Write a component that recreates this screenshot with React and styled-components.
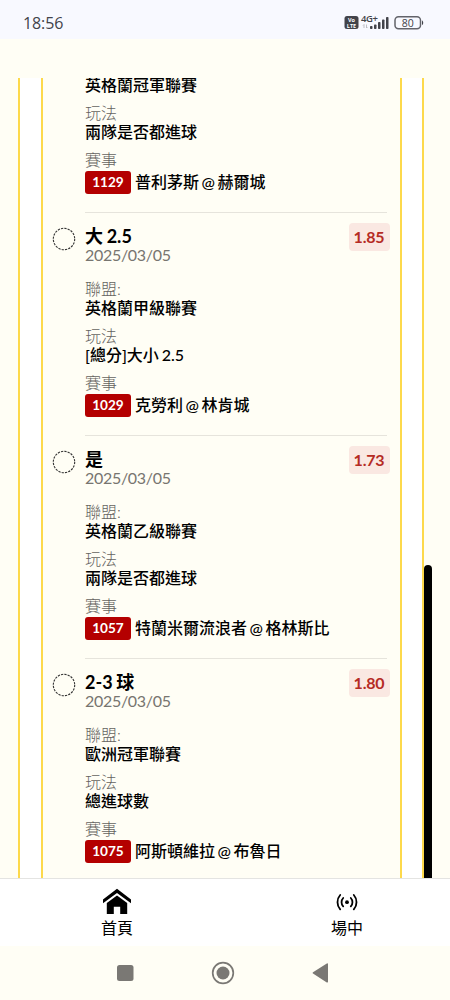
import React from 'react';
import styled, { createGlobalStyle } from 'styled-components';

const GlobalStyle = createGlobalStyle`
    * {
        box-sizing: border-box;
    }
    body {
        margin: 0;
        background: #fffef5;
        font-family: Lato, "Noto Sans CJK TC", sans-serif;
        font-size: 16px;
        color: #000;
    }
`

const Screen = styled.div`
    width: 450px;
    height: 1000px;
    display: flex;
    flex-direction: column;
    overflow: hidden;
    background: #fffef5;
`

const StatusBar = styled.header`
    height: 39px;
    flex: none;
    display: flex;
    justify-content: space-between;
    align-items: center;
    padding: 6px 26px 0 23px;
    background: #f8f9ff;
`

const Clock = styled.span`
    font-family: "Open Sans", sans-serif;
    font-size: 16px;
    line-height: 20px;
    letter-spacing: -0.1px;
    font-weight: 500;
    color: #42434a;
`

const StatusIcons = styled.svg`
    width: 80px;
    height: 24px;
    font-family: "Open Sans", sans-serif;
    font-weight: 700;
    fill: #42434a;
`

const Scroller = styled.main`
    position: relative;
    height: 800px;
    margin-top: 39px;
    flex: none;
    padding: 0 26px 0 18px;
    overflow: hidden;
`

const Frame = styled.div`
    height: 100%;
    padding: 0 20.5px 0 21px;
    background: #fff;
    border: solid #fdd94b;
    border-width: 0 2px;
`

const Slip = styled.div`
    display: flow-root;
    height: 100%;
    padding: 0 13px 0 10px;
    background: #fffef5;
    border: solid #fdd94b;
    border-width: 0 2px;
`

const ScrollThumb = styled.div`
    position: absolute;
    top: 487px;
    bottom: 0;
    left: 424px;
    width: 8px;
    border-radius: 4px 4px 0 0;
    background: #000;
`

const Bet = styled.article`
    display: grid;
    grid-template-columns: 32px 1fr;
    height: ${props => props.$cut ? '137px' : '223.2px'};
    margin-top: ${props => props.$cut ? '-3px' : '0'};
`

const Check = styled.svg`
    width: 24px;
    height: 24px;
    margin-top: 15px;
    margin-left: -1px;
    fill: none;
    stroke: #333;
`

const Body = styled.div`
    border-top: ${props => props.$cut ? '0' : '1px solid #e6e4dc'};
`

const Head = styled.div`
    display: flex;
    justify-content: space-between;
    align-items: flex-start;
    height: 66px;
    padding-top: 10px;
    margin-right: -3px;
`

const Title = styled.h3`
    margin: 3px 0 0;
    font-size: 18px;
    line-height: 20px;
    font-weight: 700;
    word-spacing: -0.7px;
`

const BetDate = styled.div`
    line-height: 18px;
    letter-spacing: -0.3px;
    color: #777570;
`

const Odds = styled.div`
    width: 41px;
    height: 28px;
    border-radius: 4px;
    background: #fae8e2;
    color: #b52b24;
    font-weight: 700;
    line-height: 28px;
    letter-spacing: -0.2px;
    text-align: center;
`

const Label = styled.div`
    height: 19px;
    line-height: 19px;
    font-weight: 300;
    color: #65635f;
`

const Value = styled.div`
    height: 19px;
    margin-bottom: 9px;
    line-height: 19px;
    font-weight: 500;
    word-spacing: -1.2px;
    white-space: nowrap;
`

const Match = styled.div`
    display: flex;
    align-items: flex-start;
    gap: 4px;
    height: 23px;
    margin-top: 1px;
    font-weight: 500;
    line-height: 23px;
    word-spacing: -1.5px;
    white-space: nowrap;
`

const Code = styled.span`
    width: 46px;
    height: 23px;
    margin-top: 1px;
    border-radius: 3px;
    background: #b40000;
    color: #fff;
    font-size: 13.6px;
    font-weight: 700;
    line-height: 23px;
    text-align: center;
`

const NavBar = styled.nav`
    display: grid;
    grid-template-columns: 230px 230px;
    flex: none;
    height: 68px;
    padding-left: 2px;
    border-top: 1px solid #e4e4e2;
    background: #fff;
`

const NavItem = styled.div`
    display: flex;
    flex-direction: column;
    align-items: center;
    padding-top: 9px;
    line-height: 22px;
    svg {
        width: 30px;
        height: 28px;
        margin-bottom: 1px;
    }
`

const SystemBar = styled.footer`
    flex: 1;
    background: #fffef5;
    display: flex;
    justify-content: center;
    svg {
        width: 450px;
        height: 54px;
        fill: #7a7874;
    }
`

const bets = [
    { cut: true, league: '英格蘭冠軍聯賽', play: '兩隊是否都進球', code: '1129', match: '普利茅斯 @ 赫爾城' },
    { title: '大 2.5', odds: '1.85', league: '英格蘭甲級聯賽', play: '[總分]大小 2.5', code: '1029', match: '克勞利 @ 林肯城' },
    { title: '是', odds: '1.73', league: '英格蘭乙級聯賽', play: '兩隊是否都進球', code: '1057', match: '特蘭米爾流浪者 @ 格林斯比' },
    { title: '2-3 球', odds: '1.80', league: '歐洲冠軍聯賽', play: '總進球數', code: '1075', match: '阿斯頓維拉 @ 布魯日' },
]

const BetRow = ({ bet }) => (
    <Bet $cut={bet.cut}>
        {bet.cut ? <span /> : (
            <Check viewBox="0 0 24 24">
                <circle cx="12" cy="12" r="10.7" strokeWidth="1.1" strokeDasharray="2.3 1.06" />
            </Check>
        )}
        <Body $cut={bet.cut}>
            {!bet.cut && (
                <>
                    <Head>
                        <div>
                            <Title>{bet.title}</Title>
                            <BetDate>2025/03/05</BetDate>
                        </div>
                        <Odds>{bet.odds}</Odds>
                    </Head>
                    <Label>聯盟:</Label>
                </>
            )}
            <Value>{bet.league}</Value>
            <Label>玩法</Label>
            <Value>{bet.play}</Value>
            <Label>賽事</Label>
            <Match>
                <Code>{bet.code}</Code>
                <span>{bet.match}</span>
            </Match>
        </Body>
    </Bet>
)

const PhoneStatus = () => (
    <StatusIcons viewBox="344 11 80 24">
        <rect x="344.5" y="16" width="14" height="13" rx="2.5" />
        <text x="351.5" y="22" fontSize="5.5" textAnchor="middle" fill="#fff">Vo</text>
        <text x="351.5" y="27.6" fontSize="5.5" textAnchor="middle" fill="#fff">LTE</text>
        <text x="361" y="22" fontSize="9.5" fontWeight="600" textLength="17">4G+</text>
        <path d="M364 28v-3.5l-1 1M366.5 24.5V28l1-1" fill="none" stroke="#b0b1b8" strokeWidth="0.8" />
        <rect x="370" y="26" width="2.5" height="3" rx="0.8" />
        <rect x="374" y="24.5" width="2.5" height="4.5" rx="0.8" />
        <rect x="378" y="22" width="2.5" height="7" rx="0.8" />
        <rect x="382" y="19.5" width="2.5" height="9.5" rx="0.8" />
        <rect x="386" y="17" width="2.5" height="12" rx="0.8" />
        <rect x="395" y="16.7" width="25.5" height="12" rx="3.5" fill="none" stroke="#62636a" strokeWidth="1.5" />
        <path d="M422 20.5c1.6.6 1.6 4 0 4.6z" />
        <text x="407.7" y="26.5" fontSize="10.5" fontWeight="500" textAnchor="middle">80</text>
    </StatusIcons>
)

const HomeIcon = () => (
    <svg viewBox="0 0 30 28">
        <path d="M15 .8 1 11.5v3.8L15 5l14 10.300v-3.800z" />
        <path d="M15 7.400 4.800 15v11h7v-7.200h6.400V26h7V15z" />
    </svg>
)

const LiveIcon = () => (
    <svg viewBox="0 0 30 28" fill="none" stroke="#000" strokeWidth="1.8" strokeLinecap="round">
        <circle cx="15" cy="14.200" r="1.900" fill="#000" stroke="none" />
        <path d="M8.200 7c-3.600 4-3.600 10.400 0 14.400M21.800 7c3.600 4 3.600 10.400 0 14.400M11.200 10c-2.200 2.300-2.200 6.100 0 8.400M18.800 10c2.200 2.300 2.200 6.100 0 8.400" />
    </svg>
)

const App = () => {
    return (
        <>
            <GlobalStyle />
            <Screen>
                <StatusBar>
                    <Clock>18:56</Clock>
                    <PhoneStatus />
                </StatusBar>
                <Scroller>
                    <Frame>
                        <Slip>
                            {bets.map(bet => <BetRow key={bet.code} bet={bet} />)}
                        </Slip>
                    </Frame>
                    <ScrollThumb />
                </Scroller>
                <NavBar>
                    <NavItem>
                        <HomeIcon />
                        首頁
                    </NavItem>
                    <NavItem>
                        <LiveIcon />
                        場中
                    </NavItem>
                </NavBar>
                <SystemBar>
                    <svg viewBox="0 946 450 54">
                        <rect x="117" y="965" width="16.500" height="16" rx="2.500" />
                        <circle cx="223" cy="973" r="10.300" fill="none" stroke="#7a7874" strokeWidth="1.700" />
                        <circle cx="223" cy="973" r="6.500" />
                        <path d="M313 972.200 326.800 963.500q1.200-.5 1.200.8v17.500q0 1.200-1.200.6L313 973.600q-1-.7 0-1.400z" />
                    </svg>
                </SystemBar>
            </Screen>
        </>
    )
}

export default App
